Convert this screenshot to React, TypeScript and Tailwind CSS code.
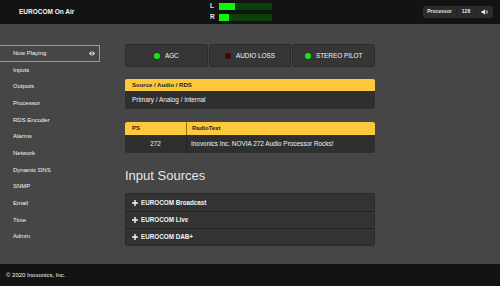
import React from "react";

const navItems = [
	"Now Playing",
	"Inputs",
	"Outputs",
	"Processor",
	"RDS Encoder",
	"Alarms",
	"Network",
	"Dynamic DNS",
	"SNMP",
	"Email",
	"Time",
	"Admin",
];

const statusItems = [
	{ label: "AGC", on: true },
	{ label: "AUDIO LOSS", on: false },
	{ label: "STEREO PILOT", on: true },
];

const sources = ["EUROCOM Broadcast", "EUROCOM Live", "EUROCOM DAB+"];

const Meter: React.FC<{ label: string; level: number }> = ({ label, level }) => (
	<div className="flex items-center h-[7px]">
		<span className="w-[9px] text-[6.5px] font-bold text-gray-200 leading-none">{label}</span>
		<div className="relative w-[53px] h-[7px] bg-[#0a3f0a]">
			<div className="absolute left-0 top-0 h-full bg-[#0cf70c]" style={{ width: `${level}px` }} />
			<div className="absolute left-[42px] top-[3px] w-[1px] h-[1px] bg-[#1d6b1d]" />
		</div>
	</div>
);

const EyeIcon = () => (
	<svg width="6" height="5" viewBox="0 0 12 10" className="fill-gray-200">
		<path d="M6 1C3 1 1 3.5 0.3 5 1 6.5 3 9 6 9s5-2.5 5.7-4C11 3.5 9 1 6 1zm0 6.5A2.5 2.5 0 1 1 6 2.5a2.5 2.5 0 0 1 0 5z" />
		<circle cx="6" cy="5" r="1.2" />
	</svg>
);

const SpeakerIcon = () => (
	<svg width="7" height="6" viewBox="0 0 14 12" className="fill-gray-200">
		<path d="M1 4h3l4-3.5v11L4 8H1z" />
		<path d="M10 3.2c1.2.8 1.2 4.8 0 5.6l-.8-.8c.7-.6.7-3.4 0-4z" />
		<path d="M11.6 1.6c2.2 1.6 2.2 7.2 0 8.8l-.8-.8c1.6-1.3 1.6-5.9 0-7.2z" />
	</svg>
);

const PlusIcon = () => (
	<svg width="6" height="6" viewBox="0 0 10 10" className="fill-gray-100">
		<path d="M3.8 0h2.4v3.8H10v2.4H6.2V10H3.8V6.2H0V3.8h3.8z" />
	</svg>
);

export default function App() {
	return (
		<div className="w-[500px] h-[286px] flex flex-col bg-[#464646] font-['Liberation_Sans',Arial,sans-serif] text-gray-100 overflow-hidden">
			{/* top bar */}
			<header className="h-[24px] bg-[#131313] flex items-center shrink-0">
				<div className="w-[210px] pl-[19px] text-[6.5px] font-bold text-gray-100">EUROCOM On Air</div>
				<div className="flex flex-col gap-[4px]">
					<Meter label="L" level={16} />
					<Meter label="R" level={10} />
				</div>
				<div className="ml-auto mr-[7px] flex h-[12px] rounded-[2px] overflow-hidden bg-[#2b2b2b] text-[5px] font-bold text-gray-200">
					<div className="w-[33px] flex items-center justify-center">Processor</div>
					<div className="w-[19px] flex items-center justify-center border-l border-[#222]">128</div>
					<div className="w-[18px] flex items-center justify-center border-l border-[#222]">
						<SpeakerIcon />
					</div>
				</div>
			</header>

			<div className="h-[240px] flex shrink-0">
				{/* side nav */}
				<nav className="w-[100px] pt-[21px] shrink-0">
					<ul>
						{navItems.map((item, i) => (
							<li
								key={item}
								className={`h-[16.7px] pl-[13px] pr-[4px] flex items-center justify-between text-[6px] text-gray-100 ${
									i === 0 ? "border border-l-0 border-[#9a9a9a]" : ""
								}`}
							>
								<span>{item}</span>
								{i === 0 && <EyeIcon />}
							</li>
						))}
					</ul>
				</nav>

				{/* content */}
				<main className="ml-[25px] w-[250px] pt-[20px]">
					<div className="grid grid-cols-3 gap-[1px]">
						{statusItems.map((s) => (
							<div
								key={s.label}
								className="h-[23px] rounded-[2px] bg-[#363636] border border-[#2c2c2c] flex items-center justify-center gap-[5px] text-[6.4px] text-gray-100"
							>
								<span
									className={`w-[6px] h-[6px] rounded-full ${s.on ? "bg-[#16e516]" : "bg-[#4a0000]"}`}
								/>
								<span>{s.label}</span>
							</div>
						))}
					</div>

					<div className="mt-[12px] rounded-[2px] overflow-hidden bg-[#2f2f2f]">
						<div className="h-[12px] bg-[#fbc93b] flex items-center px-[7px] text-[6px] font-bold text-[#222]">
							Source / Audio / RDS
						</div>
						<div className="h-[18px] flex items-center px-[7px] text-[6.4px] text-gray-100">
							Primary / Analog / Internal
						</div>
					</div>

					<div className="mt-[13px] rounded-[2px] overflow-hidden bg-[#2f2f2f]">
						<div className="h-[13px] bg-[#fbc93b] flex text-[6px] font-bold text-[#222]">
							<div className="w-[62px] flex items-center px-[7px] border-r border-[#8a6d1a]">PS</div>
							<div className="flex items-center px-[5px]">RadioText</div>
						</div>
						<div className="h-[18px] flex text-[6.4px] text-gray-100">
							<div className="w-[62px] flex items-center justify-center border-r border-[#242424]">272</div>
							<div className="flex items-center px-[4px]">Inovonics Inc. NOVIA 272 Audio Processor Rocks!</div>
						</div>
					</div>

					<h2 className="mt-[15px] text-[13px] leading-[16px] text-gray-200">Input Sources</h2>

					<div className="mt-[9px] rounded-[2px] overflow-hidden border border-[#2a2a2a] bg-[#333]">
						{sources.map((src, i) => (
							<div
								key={src}
								className={`h-[17px] flex items-center gap-[3px] px-[6px] text-[6.3px] font-bold text-gray-100 ${
									i > 0 ? "border-t border-[#222]" : ""
								}`}
							>
								<PlusIcon />
								<span>{src}</span>
							</div>
						))}
					</div>
				</main>
			</div>

			<footer className="h-[22px] bg-[#131313] flex items-center pl-[6px] text-[6px] text-gray-100 shrink-0">
				© 2020 Inovonics, Inc.
			</footer>
		</div>
	);
}
